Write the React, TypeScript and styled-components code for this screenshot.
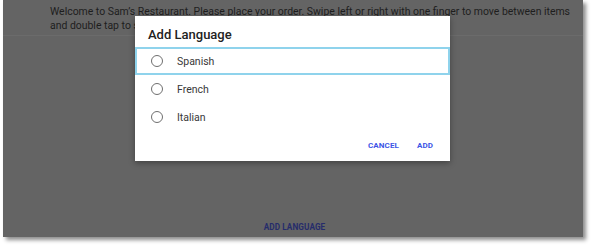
import React from 'react';
import styled, { createGlobalStyle } from 'styled-components';

const GlobalStyle = createGlobalStyle`
  html, body {
    margin: 0;
    padding: 0;
    background: #ffffff;
    font-family: Roboto, "Liberation Sans", Arial, sans-serif;
  }
`;

const Page = styled.div`
  width: 591px;
  height: 246px;
  padding-left: 3px;
  box-sizing: border-box;
`;

const Screen = styled.div`
  position: relative;
  width: 580px;
  height: 237px;
  background: #646464;
  box-shadow: 3px 3px 4px rgba(0, 0, 0, 0.45);
  display: flex;
  flex-direction: column;
`;

const Header = styled.div`
  height: 36px;
  box-sizing: border-box;
  padding: 5px 0 0 47px;
  border-bottom: 1px solid #6b6b6b;
  color: #1e1e1e;
  font-size: 10.45px;
  line-height: 13.5px;
  white-space: nowrap;
`;

const Body = styled.div`
  flex: 1;
  display: flex;
  align-items: flex-end;
  justify-content: center;
  padding-bottom: 5px;
`;

const FooterButton = styled.div`
  color: #262c6b;
  font-size: 8.2px;
  font-weight: 700;
  letter-spacing: 0.1px;
  margin-left: 3px;
`;

const Dialog = styled.div`
  position: absolute;
  left: 132px;
  top: 16px;
  width: 315px;
  height: 145px;
  background: #ffffff;
  box-shadow: 0 2px 6px rgba(0, 0, 0, 0.35);
  display: flex;
  flex-direction: column;
`;

const Title = styled.div`
  padding: 11px 0 0 13px;
  height: 31px;
  box-sizing: border-box;
  font-size: 13px;
  font-weight: 500;
  color: #222222;
`;

const Options = styled.div`
  display: flex;
  flex-direction: column;
`;

const Option = styled.div<{ $focused?: boolean }>`
  height: 28px;
  box-sizing: border-box;
  display: flex;
  align-items: center;
  padding-left: 14px;
  gap: 14px;
  border: 2px solid ${(p) => (p.$focused ? '#8fd3ec' : 'transparent')};
  font-size: 10.5px;
  color: #383838;
`;

const Radio = styled.span`
  width: 10px;
  height: 10px;
  border-radius: 50%;
  border: 1.5px solid #6f6f6f;
  flex-shrink: 0;
`;

const Actions = styled.div`
  display: flex;
  justify-content: flex-end;
  align-items: center;
  gap: 18px;
  padding: 10px 17px 0 0;
`;

const ActionButton = styled.div`
  color: #3d55e6;
  font-size: 8px;
  font-weight: 700;
  letter-spacing: 0.1px;
`;

const languages = ['Spanish', 'French', 'Italian'];

export default function App() {
  return (
    <>
      <GlobalStyle />
      <Page>
        <Screen>
          <Header>
            Welcome to Sam’s Restaurant. Please place your order. Swipe left or right with one finger to move between items
            <br />
            and double tap to select.
          </Header>
          <Body>
            <FooterButton>ADD LANGUAGE</FooterButton>
          </Body>
          <Dialog>
            <Title>Add Language</Title>
            <Options>
              {languages.map((lang, i) => (
                <Option key={lang} $focused={i === 0}>
                  <Radio />
                  {lang}
                </Option>
              ))}
            </Options>
            <Actions>
              <ActionButton>CANCEL</ActionButton>
              <ActionButton>ADD</ActionButton>
            </Actions>
          </Dialog>
        </Screen>
      </Page>
    </>
  );
}
